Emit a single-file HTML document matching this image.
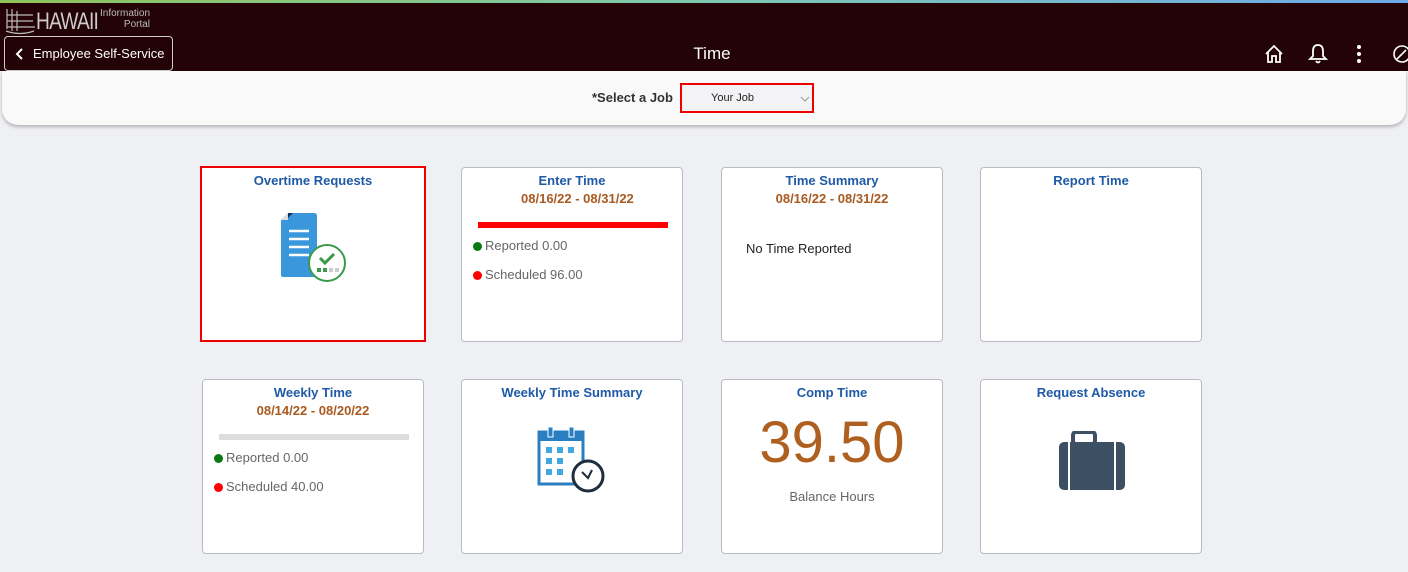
<!DOCTYPE html>
<html><head><meta charset="utf-8"><style>
*{box-sizing:border-box;margin:0;padding:0}
body{width:1408px;height:572px;overflow:hidden;background:#eff0f4;font-family:"Liberation Sans",Arial,sans-serif;position:relative}
.topline{position:absolute;left:0;top:0;width:1408px;height:3px;background:linear-gradient(90deg,#8fc45a,#7ec8b0,#6fa8e8)}
.hdr{position:absolute;left:0;top:3px;width:1408px;height:68px;background:#230305}
.band{position:absolute;left:2px;top:71px;width:1404px;height:54px;background:#f9f9f9;border-radius:0 0 16px 16px;box-shadow:0 2px 3px rgba(0,0,0,.25)}
.tile{position:absolute;width:222px;height:175px;background:#fff;border:1px solid #b8bcc2;border-radius:4px;text-align:center}
.tt{color:#1f5aa6;font-weight:bold;font-size:13px;margin-top:5px}
.dt{color:#a85a20;font-weight:bold;font-size:13px;margin-top:3px}
.ln{position:absolute;font-size:13px;color:#666;left:11px}
.dot{display:inline-block;width:9px;height:9px;border-radius:50%;margin-right:3px;vertical-align:-1px}
</style></head><body>
<div class="topline"></div>
<div class="hdr">
 <svg style="position:absolute;left:4px;top:4px" width="32" height="28" viewBox="0 0 32 28" fill="none" stroke="#bbb" stroke-width="1.2"><path d="M3 2v20M8 2v22M13 4v20M3 8h26M3 14h26M3 20h28M2 24q14 5 28 0"/></svg>
 <div style="position:absolute;left:36px;top:5px;color:#ccc;font-size:24px;letter-spacing:-1px;transform:scaleX(.8);transform-origin:left">HAWAII</div>
 <div style="position:absolute;left:100px;top:5px;color:#bbb;font-size:10px;line-height:11px;text-align:right">Information<br>Portal</div>
 <div style="position:absolute;left:4px;top:33px;width:169px;height:35px;border:1px solid #ccc;border-radius:4px;color:#fff;font-size:13px;line-height:33px;padding-left:28px">Employee Self-Service</div>
 <svg style="position:absolute;left:15px;top:44px" width="10" height="14" viewBox="0 0 10 14"><path d="M7 2L2 7l5 5" stroke="#fff" stroke-width="2" fill="none"/></svg>
 <div style="position:absolute;left:0;width:1424px;top:41px;text-align:center;color:#fff;font-size:17px">Time</div>
 <svg style="position:absolute;left:1264px;top:41px" width="20" height="20" viewBox="0 0 20 20" fill="none" stroke="#fff" stroke-width="1.8"><path d="M2 10L10 2l8 8M4 8v10h4v-6h4v6h4V8"/></svg>
 <svg style="position:absolute;left:1308px;top:40px" width="20" height="22" viewBox="0 0 20 22" fill="none" stroke="#fff" stroke-width="1.8"><path d="M10 2c-4 0-5 3-5 6v5l-3 3h16l-3-3V8c0-3-1-6-5-6zM8 18q2 3 4 0"/></svg>
 <svg style="position:absolute;left:1355px;top:41px" width="8" height="20"><circle cx="4" cy="3" r="2" fill="#fff"/><circle cx="4" cy="10" r="2" fill="#fff"/><circle cx="4" cy="17" r="2" fill="#fff"/></svg>
 <svg style="position:absolute;left:1392px;top:41px" width="16" height="20" viewBox="0 0 16 20" fill="none" stroke="#fff" stroke-width="1.6"><circle cx="10" cy="10" r="8"/><path d="M5 15l9-9"/></svg>
</div>
<div class="band"></div>
<div style="position:absolute;left:592px;top:90px;font-size:13px;font-weight:bold;color:#333">*Select a Job</div>
<div style="position:absolute;left:680px;top:83px;width:134px;height:30px;border:2px solid #e00;background:#f3f3f5">
 <div style="position:absolute;left:29px;top:7px;font-size:11px;color:#222">Your Job</div>
 <svg style="position:absolute;left:118px;top:10px" width="10" height="8"><path d="M1 2l4 4 4-4" stroke="#999" fill="none"/></svg>
</div>

<div class="tile" style="left:200px;top:166px;width:226px;height:176px;border:2px solid #e00;border-radius:0"><div class="tt">Overtime Requests</div>
 <svg style="position:absolute;left:78px;top:44px" width="70" height="72" viewBox="0 0 70 72"><path d="M1 8L8 1h26q3 0 3 3v59q0 2-2 2H3q-2 0-2-2z" fill="#3a97dc"/><path d="M1 8L8 1v7z" fill="#ddd"/><path d="M8 1h5L8 6z" fill="#1a2f5a"/><g stroke="#fff" stroke-width="2.5"><path d="M9 19h20M9 27h20M9 35h20M9 43h20"/></g><circle cx="47" cy="51" r="18" fill="#fff" stroke="#3a9a4a" stroke-width="2"/><path d="M40 46l5 5 9-9" stroke="#3a9a4a" stroke-width="3" fill="none"/><rect x="37" y="56" width="4" height="4" fill="#3a9a4a"/><rect x="43" y="56" width="4" height="4" fill="#3a9a4a"/><rect x="49" y="56" width="4" height="4" fill="#ccc"/><rect x="55" y="56" width="4" height="4" fill="#ccc"/></svg>
</div>
<div class="tile" style="left:461px;top:167px"><div class="tt">Enter Time</div><div class="dt">&nbsp;&nbsp;&nbsp;08/16/22 - 08/31/22</div>
 <div style="position:absolute;left:16px;top:54px;width:190px;height:6px;background:#f00"></div>
 <div class="ln" style="top:70px"><span class="dot" style="background:#0a7a10"></span>Reported 0.00</div>
 <div class="ln" style="top:99px"><span class="dot" style="background:#f00"></span>Scheduled 96.00</div>
</div>
<div class="tile" style="left:721px;top:167px"><div class="tt">Time Summary</div><div class="dt">08/16/22 - 08/31/22</div>
 <div style="position:absolute;left:24px;top:73px;font-size:13px;color:#222">No Time Reported</div></div>
<div class="tile" style="left:980px;top:167px"><div class="tt">Report Time</div></div>

<div class="tile" style="left:202px;top:379px"><div class="tt">Weekly Time</div><div class="dt">08/14/22 - 08/20/22</div>
 <div style="position:absolute;left:16px;top:54px;width:190px;height:6px;background:#ddd"></div>
 <div class="ln" style="top:70px"><span class="dot" style="background:#0a7a10"></span>Reported 0.00</div>
 <div class="ln" style="top:99px"><span class="dot" style="background:#f00"></span>Scheduled 40.00</div>
</div>
<div class="tile" style="left:461px;top:379px"><div class="tt">Weekly Time Summary</div>
 <svg style="position:absolute;left:75px;top:46px" width="72" height="72" viewBox="0 0 72 72"><rect x="2" y="6" width="44" height="52" fill="#fff" stroke="#2b7fc0" stroke-width="3"/><rect x="2" y="6" width="44" height="9" fill="#2b7fc0"/><rect x="11" y="1" width="5" height="10" fill="#2b7fc0" stroke="#fff"/><rect x="32" y="1" width="5" height="10" fill="#2b7fc0" stroke="#fff"/><g fill="#3fa8e0"><rect x="9" y="21" width="6" height="6"/><rect x="20" y="21" width="6" height="6"/><rect x="31" y="21" width="6" height="6"/><rect x="9" y="32" width="6" height="6"/><rect x="20" y="32" width="6" height="6"/><rect x="9" y="43" width="6" height="6"/><rect x="20" y="43" width="6" height="6"/></g><circle cx="51" cy="50" r="15" fill="#fff" stroke="#1f2d3d" stroke-width="3"/><path d="M45 46l6 6 4-8" stroke="#1f2d3d" stroke-width="2" fill="none"/></svg>
</div>
<div class="tile" style="left:721px;top:379px"><div class="tt">Comp Time</div>
 <div style="position:absolute;left:0;right:0;top:29px;font-size:58px;color:#b0601e">39.50</div>
 <div style="position:absolute;left:0;right:0;top:109px;font-size:13px;color:#666">Balance Hours</div></div>
<div class="tile" style="left:980px;top:379px"><div class="tt">Request Absence</div>
 <svg style="position:absolute;left:77px;top:51px" width="68" height="60" viewBox="0 0 68 60"><rect x="15" y="1" width="22" height="12" rx="3" fill="none" stroke="#3c4f63" stroke-width="4"/><rect x="1" y="11" width="66" height="48" rx="5" fill="#3c4f63"/><path d="M11 11v48M57 11v48" stroke="#fff" stroke-width="2"/></svg>
</div>
</body></html>
